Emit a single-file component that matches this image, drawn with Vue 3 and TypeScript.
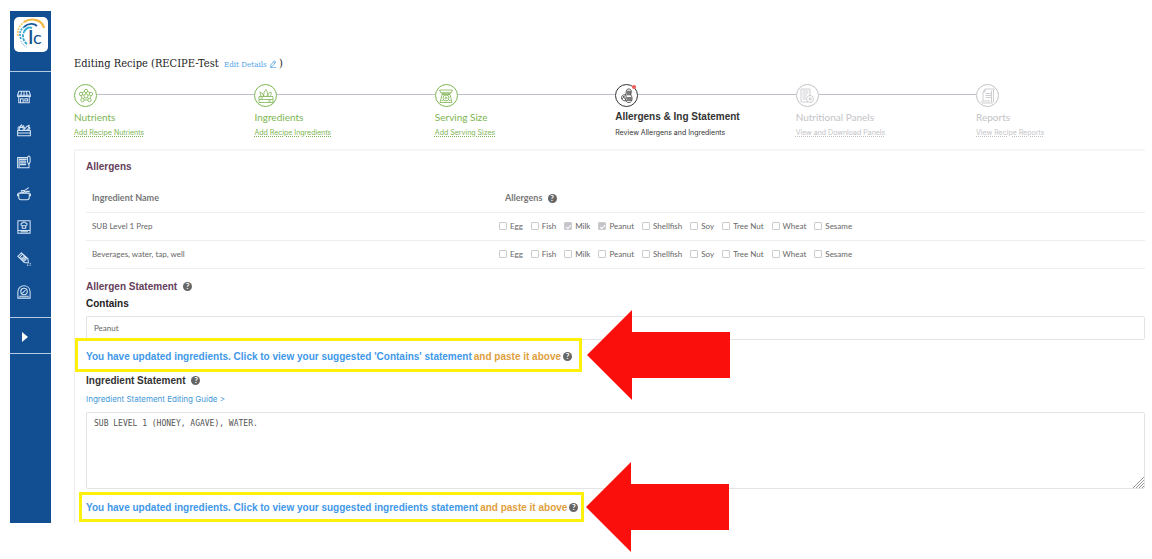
<script setup lang="ts">
import { ref } from 'vue'

interface Step {
  title: string
  link: string
  state: 'done' | 'active' | 'todo'
  icon: string
}

const steps: Step[] = [
  { title: 'Nutrients', link: 'Add Recipe Nutrients', state: 'done', icon: 'atom' },
  { title: 'Ingredients', link: 'Add Recipe Ingredients', state: 'done', icon: 'crate' },
  { title: 'Serving Size', link: 'Add Serving Sizes', state: 'done', icon: 'scale' },
  { title: 'Allergens & Ing Statement', link: 'Review Allergens and Ingredients', state: 'active', icon: 'peanut' },
  { title: 'Nutritional Panels', link: 'View and Download Panels', state: 'todo', icon: 'panel' },
  { title: 'Reports', link: 'View Recipe Reports', state: 'todo', icon: 'report' },
]

const navItems = [
  { id: 'store', label: 'Store' },
  { id: 'basket', label: 'Ingredients' },
  { id: 'notes', label: 'Recipes' },
  { id: 'pot', label: 'Cooking' },
  { id: 'book', label: 'Cookbook' },
  { id: 'tag', label: 'Labels' },
  { id: 'gauge', label: 'Scale' },
]

const allergens = ['Egg', 'Fish', 'Milk', 'Peanut', 'Shellfish', 'Soy', 'Tree Nut', 'Wheat', 'Sesame']

const rows = ref([
  { name: 'SUB Level 1 Prep', checked: ['Milk', 'Peanut'] },
  { name: 'Beverages, water, tap, well', checked: [] as string[] },
])

const contains = ref('Peanut')
const statement = ref('SUB LEVEL 1 (HONEY, AGAVE), WATER.')
</script>

<template>
  <div class="page">
    <aside class="sidebar">
      <a class="brand" href="#" aria-label="Home">
        <span class="logo">
          <svg viewBox="0 0 34 34" width="34" height="34" fill="none">
            <path d="M10 5 C18 0 28 3 30 11" stroke="#f3b744" stroke-width="2.2" />
            <path d="M4 19 C3 12 6 8 10 5" stroke="#f3c86a" stroke-width="1.6" stroke-dasharray="2 1" />
            <path d="M10 10 C14 6 20 6 23 9" stroke="#1a5a9c" stroke-width="1.8" />
            <path d="M7 22 C5 16 6 13 10 10" stroke="#3c9bcb" stroke-width="1.6" stroke-dasharray="2 1" />
            <path d="M10 15 C12 11 15 10 18 11" stroke="#36b3d9" stroke-width="2" />
            <path d="M13 27 C9 24 8 19 10 15" stroke="#36a5d0" stroke-width="1.8" stroke-dasharray="3 1" />
            <path d="M7 24 C8 27 10 29 13 30" stroke="#82bfdc" stroke-width="1.2" stroke-dasharray="1 1" />
          </svg>
          <span class="logo-text"><b>l</b>c</span>
        </span>
      </a>
      <nav class="nav">
        <a v-for="item in navItems" :key="item.id" href="#" :aria-label="item.label">
          <svg viewBox="0 0 16 16" width="14" height="14" fill="none" stroke="#d5e4f3" stroke-width="1.2" stroke-linejoin="round" stroke-linecap="round">
            <template v-if="item.id === 'store'">
              <path d="M2 1.500h12L15.300 6H.7zM.7 6v1.500h14.600V6M5 2L4.500 7M8 2v5M11 2l.5 5M2 8v6.500h12V8M4 14V10h3v4M9 10h3v2.500H9z" />
            </template>
            <template v-else-if="item.id === 'basket'">
              <path d="M.7 8.500h14.600v6H.7zM1 11.500h14M3 8V5l2-3 2 3v3M4 5h2M8 8l3-4 3-1.500L13 6l-2 2M1.500 7.500C.5 5 2 4 3 4.500M9 7L7.500 3M13 8c2-1 2-2 1.500-3" />
            </template>
            <template v-else-if="item.id === 'notes'">
              <path d="M11 3H.7v11.500h13V11M2.500 13V5h8M4 7h6M4 9h6M4 11h6M12 3.500c0-3 3-3 3 0V8l-1.500 3L12 8z" />
            </template>
            <template v-else-if="item.id === 'pot'">
              <path d="M2 7h12v5c0 1.500-1 2.500-2.500 2.500h-7C3 14.500 2 13.500 2 12zM2 10H.5V8H2M14 10h1.500V8H14M4 7c0-2 2-2 2.500-1M7 6.500c1-2 3-2 4 .5M8 4.500l5-3.500M5 4h3M11 5h3" />
            </template>
            <template v-else-if="item.id === 'book'">
              <path d="M1 .8h14v14.400H1zM1 12h14M4.500 13.500H12M6 6.500v3h4v-3M5.500 6.500C3.500 5 5 3 6.500 3.500 7 1.800 9.500 2 9.500 3.500 12 3 12 5.500 10.500 6.500z" />
            </template>
            <template v-else-if="item.id === 'tag'">
              <path d="M1 5L5 1l7.500 6.500.5 5-4.500-.5zM3 6l3-3M4 7l4 4M7.500 4.500L11 8M5.500 6.500l3.500 3.500M7 6l3 3M12 15h.5M15 15h.2M15 12.800h.2" />
            </template>
            <template v-else>
              <path d="M1 15V8C1-1.500 15-1.500 15 8v7zM3 12.800h10" />
              <circle cx="8" cy="7.500" r="3.700" /><path d="M6.500 9l3-3" />
            </template>
          </svg>
        </a>
      </nav>
      <button class="expand" type="button" aria-label="Expand menu">
        <svg viewBox="0 0 6 10" width="6" height="10"><path d="M0 0l6 5-6 5z" fill="#fff" /></svg>
      </button>
    </aside>

    <main class="main">
      <h1 class="title">
        Editing Recipe (RECIPE-Test
        <a href="#">Edit Details
          <svg viewBox="0 0 10 10" width="8" height="8" fill="none" stroke="#55a5e6"><path d="M2 6.500L6.500 1l2 1.500L4 8H2zM1 9.500h8M5.500 2.500l2 1.500" /></svg></a>)
      </h1>

      <ol class="steps">
        <li v-for="step in steps" :key="step.title" :class="['step', step.state]">
          <div class="track">
            <span class="bubble">
              <svg viewBox="0 0 16 16" width="16" height="16" fill="none" stroke="currentColor" stroke-width="0.8" stroke-linejoin="round">
                <template v-if="step.icon === 'atom'">
                  <circle cx="8" cy="8" r="2" /><circle cx="8" cy="3" r="1.700" /><circle cx="13" cy="6" r="1.700" /><circle cx="11.500" cy="12" r="1.700" /><circle cx="4.500" cy="12" r="1.700" /><circle cx="3" cy="6" r="1.700" />
                  <path d="M8 4.700V6M11.300 6.500L10 7.500M10.500 10.700L9.300 9.500M5.500 10.700l1.200-1.200M4.700 6.500L6 7.500M6.300 3.500L4 4.700M9.700 3.500L12 4.700M13 7.700l-1 2.600M3 7.700l1 2.600M6.200 12h3.600" />
                </template>
                <template v-else-if="step.icon === 'crate'">
                  <path d="M1 8.500h14v6H1zM1 11.500h14M3 8.500L2 4l3 2 .5 2.500M6 8.500C5 5 7 3 8 1.500c1.500 2 2 4 1 7M10 8.500c0-3 1-4 3-4.500.5 2 0 3.500-1 4.500M2.500 10H5M10 13h3" />
                </template>
                <template v-else-if="step.icon === 'scale'">
                  <path d="M1.500 2h13l-1.500 3H3zM5 5v2M11 5v2M4 6.500h8l2 8H2z" /><circle cx="8" cy="10" r="3" /><circle cx="8" cy="10" r="1" /><path d="M3.500 12.500h1.500M11 12.500h1.500M3.500 5h9" />
                </template>
                <template v-else-if="step.icon === 'peanut'">
                  <path d="M9 1c3-.5 4 2 3 4.500-.5 1.500.5 2 1 4 .5 3-1 5-3 5-3 0-4-2.500-3-5 .5-1.500-.5-2.500 0-4.500C7.300 2.500 8 1.200 9 1zM9 2.500v5M11 2.500v5M7.500 4h4.500M7.500 6h4.500M9 9v4M11 9v4M7 10h6M7.500 12H13" />
                  <path d="M7 7C4 6 2 8 2.500 10.500 3.500 13 6 13 7.500 12.500M4 8l2.500 3.500M6 7.500L3 11" />
                </template>
                <template v-else-if="step.icon === 'panel'">
                  <path d="M9 14H2V1h9v7M3.500 3h6M3.500 5h6M3.500 7H8M3.500 9H7M3.500 11H7" /><circle cx="11" cy="11" r="3.500" /><path d="M11 9v4M9.500 11H13" />
                </template>
                <template v-else>
                  <path d="M5 1h9.500l-1 1v11c0 1-1 2-2 2H2.500c-1 0-1-2 0-2H3V4zM5 1v3H3M5.500 5.500H11M5.500 7.500H11M5.500 9.500H11M3 13h7M11.500 2.500v12" />
                </template>
              </svg>
              <i v-if="step.state === 'active'" class="dot"></i>
            </span>
          </div>
          <strong>{{ step.title }}</strong>
          <a href="#">{{ step.link }}</a>
        </li>
      </ol>

      <section class="panel">
        <h2 class="plum first">Allergens</h2>
        <table>
          <thead>
            <tr>
              <th>Ingredient Name</th>
              <th class="wide">Allergens <button class="help" type="button" aria-label="Allergens help">?</button></th>
            </tr>
          </thead>
          <tbody>
            <tr v-for="row in rows" :key="row.name">
              <td>{{ row.name }}</td>
              <td class="checks-cell">
                <div class="checks">
                  <label v-for="a in allergens" :key="a">
                    <input v-model="row.checked" type="checkbox" :value="a" />{{ a }}
                  </label>
                </div>
              </td>
            </tr>
          </tbody>
        </table>

        <h2 class="plum statement">Allergen Statement <button class="help" type="button" aria-label="Allergen statement help">?</button></h2>
        <label class="field-label" for="contains">Contains</label>
        <input id="contains" v-model="contains" class="text-input" type="text" />

        <div class="notice upper">
          <a href="#">You have updated ingredients. Click to view your suggested 'Contains' statement</a>
          <a href="#" class="paste">and paste it above</a>
          <button class="help" type="button" aria-label="Contains help">?</button>
          <svg class="arrow" viewBox="0 0 143 90" width="143" height="90"><path d="M0 45L45 0V22H143V68H45V90z" fill="#fa0f0c" /></svg>
        </div>

        <h2 class="dark"><label for="statement">Ingredient Statement</label> <button class="help" type="button" aria-label="Ingredient statement help">?</button></h2>
        <a class="guide" href="#">Ingredient Statement Editing Guide &gt;</a>
        <div class="area">
          <textarea id="statement" v-model="statement"></textarea>
          <svg class="grip" viewBox="0 0 12 12" width="12" height="12" stroke="#999" stroke-width="1"><path d="M1 12L12 1M4 12l8-8M7 12l5-5M10 12l2-2" /></svg>
        </div>

        <div class="notice lower">
          <a href="#">You have updated ingredients. Click to view your suggested ingredients statement</a>
          <a href="#" class="paste">and paste it above</a>
          <button class="help" type="button" aria-label="Ingredients statement help">?</button>
          <svg class="arrow" viewBox="0 0 143 90" width="143" height="90"><path d="M0 45L45 0V22H143V68H45V90z" fill="#fa0f0c" /></svg>
        </div>
      </section>
    </main>
  </div>
</template>

<style>
body {
  margin: 0;
  background: #fff;
}
</style>

<style scoped>
* {
  box-sizing: border-box;
}

.page {
  display: flex;
  gap: 23px;
  padding: 11px 7px 36px 10px;
  font-family: Lato, "Liberation Sans", sans-serif;
  font-size: 8px;
  color: #666;
}

a {
  color: inherit;
  text-decoration: none;
}

button {
  border: 0;
  padding: 0;
  cursor: pointer;
}

h1,
h2 {
  margin: 0;
}

.sidebar {
  flex: none;
  display: flex;
  flex-direction: column;
  width: 41px;
  background: #124e92;
}

.brand {
  display: flex;
  justify-content: center;
  padding: 6px 0 8px;
  height: 60px;
}

.logo {
  position: relative;
  width: 34px;
  height: 35px;
  border-radius: 5px;
  background: #fff;
}

.logo-text {
  position: absolute;
  right: 6px;
  bottom: 6px;
  font-size: 18px;
  line-height: 18px;
  color: #17518f;
}

.nav {
  display: grid;
  grid-auto-rows: 1fr;
  min-height: 247px;
  padding: 9px 0;
  border-top: 1px solid #b5cbe2;
  border-bottom: 1px solid #b5cbe2;
}

.nav a {
  display: flex;
  align-items: center;
  padding-left: 7px;
}

.expand {
  display: flex;
  align-items: center;
  justify-content: center;
  height: 36px;
  padding: 2px 12px 0 0;
  background: none;
  border-bottom: 1px solid #b5cbe2;
}

.main {
  flex: 1;
  min-width: 0;
}

.title {
  padding-top: 45px;
  font-family: "DejaVu Serif Condensed", "DejaVu Serif", serif;
  font-size: 11px;
  line-height: 16px;
  font-weight: 400;
  color: #222;
}

.title a {
  margin: 0 2px;
  font-size: 8px;
  color: #55a5e6;
}

.title svg {
  vertical-align: -1px;
}

.steps {
  display: flex;
  margin: 11px 0 0;
  padding: 0;
  list-style: none;
}

.step {
  flex: 1;
  display: flex;
  flex-direction: column;
  align-items: flex-start;
  white-space: nowrap;
}

.step:last-child {
  flex: 0 0 169px;
}

.track {
  display: flex;
  align-items: center;
  width: 100%;
}

.track::after {
  content: "";
  flex: 1;
  height: 1px;
  margin-bottom: 2px;
  background: #bfc0ca;
}

.step:last-child .track::after {
  display: none;
}

.bubble {
  position: relative;
  display: flex;
  align-items: center;
  justify-content: center;
  width: 23px;
  height: 23px;
  border: 1px solid currentColor;
  border-radius: 50%;
}

.dot {
  position: absolute;
  top: 0;
  right: 1px;
  width: 4px;
  height: 4px;
  border-radius: 50%;
  background: #f45b5b;
}

.step strong {
  margin-top: 3px;
  font-size: 10px;
  line-height: 14px;
  font-weight: 400;
}

.step a {
  margin-top: 4px;
  font-family: Inter, sans-serif;
  font-size: 7px;
  line-height: 10px;
  text-decoration: underline dotted 1px;
}

.done {
  color: #7cb551;
}

.active {
  color: #333;
}

.step.active strong {
  font-family: "Liberation Sans", sans-serif;
  font-weight: 700;
}

.step.active a {
  text-decoration: none;
}

.todo {
  color: #c3c3c7;
}

.panel {
  margin-top: 11px;
  padding: 0 0 1px 11px;
  border-top: 2px solid #f6f6f6;
  border-left: 1px solid #eee;
}

h2 {
  display: flex;
  align-items: center;
  gap: 6px;
  font-family: "Liberation Sans", sans-serif;
  font-size: 10px;
  line-height: 16px;
}

.plum {
  color: #66405c;
}

.first {
  padding-top: 8px;
}

.dark {
  margin-top: 1px;
  color: #333;
}

table {
  width: 100%;
  border-collapse: collapse;
}

th,
td {
  padding: 0 6px;
  text-align: left;
  border-bottom: 1px solid #eee;
}

th {
  height: 37px;
  padding-top: 9px;
  font-size: 9px;
  color: #777;
}

.wide {
  width: 61%;
}

.wide .help {
  margin-left: 3px;
}

td {
  height: 28px;
}

.checks-cell {
  padding: 0;
}

.checks {
  display: flex;
  gap: 8px;
}

.checks label {
  display: flex;
  align-items: center;
  gap: 3px;
}

.checks input {
  appearance: none;
  display: grid;
  place-items: center;
  width: 8px;
  height: 8px;
  margin: 0;
  border: 1px solid #ccc;
  border-radius: 1px;
}

.checks input:checked {
  background: #c4c4ca;
}

.checks input:checked::after {
  content: "";
  width: 2px;
  height: 4px;
  border: solid #fff;
  border-width: 0 1px 1px 0;
  transform: rotate(45deg);
}

.help {
  display: inline-block;
  flex: none;
  width: 9px;
  height: 9px;
  border-radius: 50%;
  background: #666;
  color: #fff;
  font: 700 8px/9px Lato, sans-serif;
  text-align: center;
}

.statement {
  margin-top: 10px;
}

.field-label {
  display: block;
  font-family: "Liberation Sans", sans-serif;
  font-size: 10px;
  line-height: 17px;
  font-weight: 700;
  color: #222;
}

.text-input {
  display: block;
  width: 100%;
  height: 24px;
  margin-top: 4px;
  padding: 0 7px;
  border: 1px solid #e4e4e4;
  border-radius: 2px;
  font: 8px Lato, sans-serif;
  color: #666;
}

.notice {
  position: relative;
  display: flex;
  align-items: center;
  gap: 2px;
  width: fit-content;
  border: 3px solid #fdf00d;
  background: #fff;
  font-family: "Liberation Sans", sans-serif;
  font-size: 10px;
  line-height: 14px;
  font-weight: 700;
  color: #3f98e8;
  white-space: nowrap;
}

.paste {
  color: #e0a040;
}

.upper {
  margin: -2px 0 0 -11px;
  padding: 9px 7px 5px 8px;
}

.lower {
  margin: 3px 0 0 -7px;
  padding: 6px 3px 4px 4px;
}

.arrow {
  position: absolute;
  left: 100%;
  top: 50%;
  margin: -45px 0 0 8px;
}

.lower .arrow {
  margin-left: 5px;
}

.guide {
  display: block;
  margin-top: 4px;
  font-family: Inter, sans-serif;
  line-height: 12px;
  color: #3f98d8;
}

.area {
  position: relative;
  margin-top: 7px;
}

textarea {
  display: block;
  width: 100%;
  height: 77px;
  padding: 5px 7px;
  border: 1px solid #e4e4e4;
  border-radius: 2px;
  resize: none;
  font: 8px/12px "DejaVu Sans Mono", monospace;
  color: #555;
}

.grip {
  position: absolute;
  right: 1px;
  bottom: 1px;
}
</style>
